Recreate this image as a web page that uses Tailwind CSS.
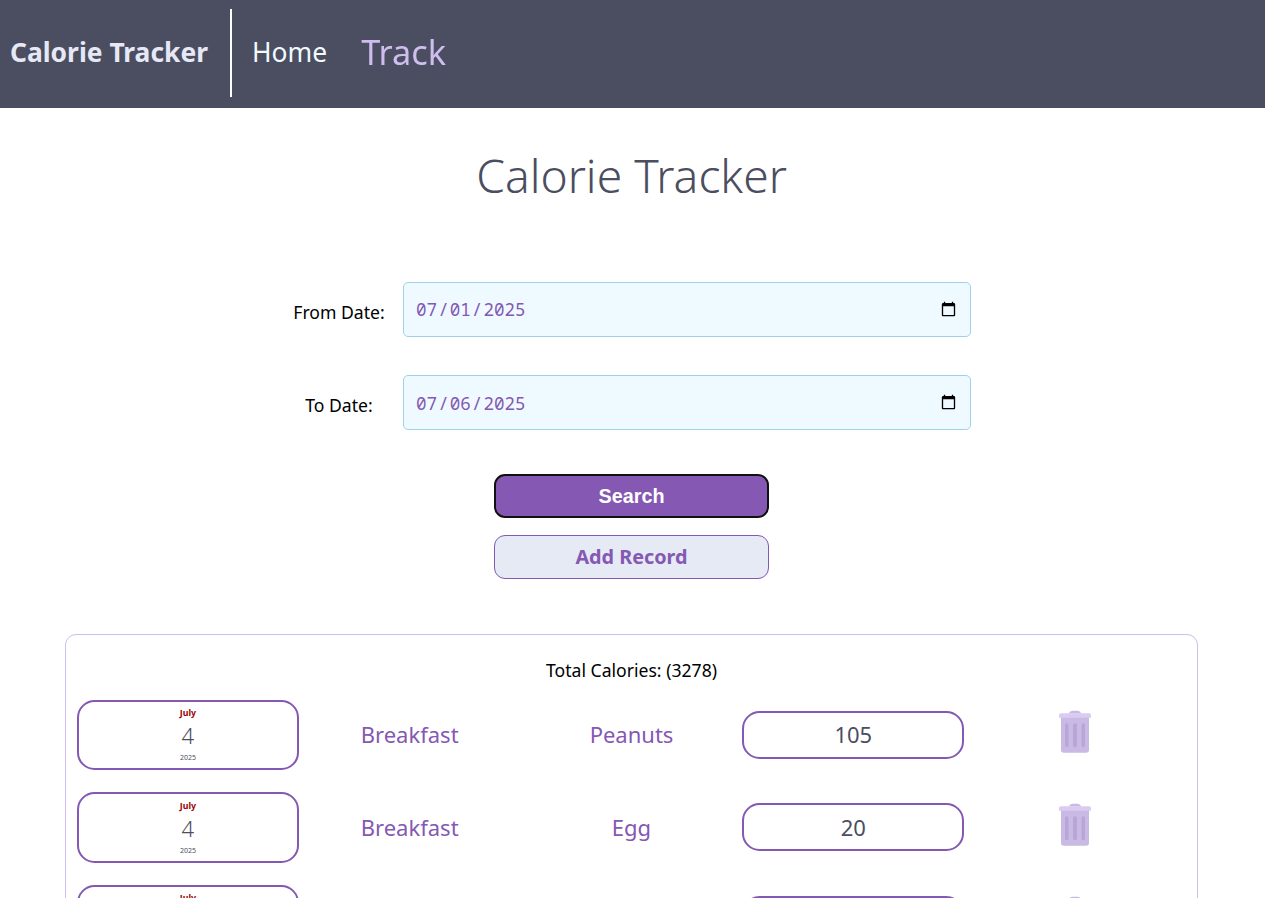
<!DOCTYPE html>
<html lang="en">
<head>
<meta charset="utf-8">
<title>Calorie Tracker</title>
<script src="https://cdn.jsdelivr.net/npm/@tailwindcss/browser@4"></script>
</head>
<body class="h-[898px] overflow-hidden bg-white text-black font-['Noto_Sans',sans-serif]">
<header class="flex h-[108px] items-start bg-[#4a4e60] pt-[9px]">
  <div class="flex h-[88px] w-[232px] items-center border-r-2 border-white pl-[10px] text-[26.4px] font-bold whitespace-nowrap text-[#e6e9f5]">Calorie Tracker</div>
  <nav class="flex h-[88px] items-center pl-5">
    <a class="text-[26.4px] text-[#f0faff]">Home</a>
    <a class="ml-[44px] inline-block scale-130 text-[26.4px] text-[#d0bdf0] will-change-transform">Track</a>
  </nav>
</header>
<main>
  <h1 class="mt-[34px] pr-[2px] text-center text-[46.2px] leading-[68px] font-light text-[#4a4e60]">Calorie Tracker</h1>
  <form class="mt-[72px] flex flex-col">
    <div class="flex h-[55px] items-center pl-[275px]">
      <label class="w-[128px] pt-[5px] text-center text-[17.6px]">From Date:</label>
      <input type="date" value="2025-07-01" class="h-[55px] w-[568px] rounded-[5px] border border-[#9ed2ea] bg-[#eefaff] pr-[11px] pl-[11px] font-['Noto_Sans_Mono',monospace] text-[17.6px] text-[#8458b3] [&::-webkit-calendar-picker-indicator]:h-[17px] [&::-webkit-calendar-picker-indicator]:w-[17px]">
    </div>
    <div class="mt-[38px] flex h-[55px] items-center pl-[275px]">
      <label class="w-[128px] pt-[5px] text-center text-[17.6px]">To Date:</label>
      <input type="date" value="2025-07-06" class="h-[55px] w-[568px] rounded-[5px] border border-[#9ed2ea] bg-[#eefaff] pt-px pr-[11px] pl-[11px] font-['Noto_Sans_Mono',monospace] text-[17.6px] text-[#8458b3] [&::-webkit-calendar-picker-indicator]:h-[17px] [&::-webkit-calendar-picker-indicator]:w-[17px]">
    </div>
    <div class="mt-[44px] flex flex-col gap-[17px] pl-[494px]">
      <button type="button" class="h-[44px] w-[275px] rounded-[11px] border-2 border-[#101010] bg-[#8458b3] pt-px font-['Liberation_Sans',sans-serif] text-[19.8px] font-bold text-white">Search</button>
      <button type="button" class="h-[44px] w-[275px] rounded-[11px] border border-[#8458b3] bg-[#e5eaf5] text-[19.8px] font-bold text-[#8458b3]">Add Record</button>
    </div>
  </form>
  <section class="mt-[55px] ml-[65px] h-[600px] w-[1133px] rounded-[11px] border border-[#d0bdf0] px-[11px] pt-[23px]">
    <p class="h-[41.7px] text-center text-[17.6px] leading-[24px]">Total Calories: (3278)</p>
    <div id="rows" class="flex flex-col gap-[22.5px]"></div>
  </section>
</main>
<template id="row">
  <div class="grid h-[70.2px] grid-cols-5 items-center text-center text-[22px] text-[#8458b3]">
    <div class="flex h-[70.2px] flex-col items-center rounded-[17.6px] border-2 border-[#8458b3] pt-[4.4px]">
      <span class="h-[14px] text-[8.8px] leading-[15px] font-bold text-[#9b0000]">July</span>
      <span class="h-[32px] text-[22px] leading-[31px] font-light text-[#4a4e60]">4</span>
      <span class="h-[12px] text-[7px] leading-[12px] text-[#4a4e60]">2025</span>
    </div>
    <div data-meal class="pb-[0.4px]"></div>
    <div data-food class="pb-[0.4px]"></div>
    <div data-cal class="mb-[0.4px] flex h-[48px] items-center justify-center rounded-[17.6px] border-2 border-[#8458b3] text-[#4a4e60]"></div>
    <div class="flex justify-center">
      <svg width="34" height="44" viewBox="0 0 34 44" class="-mt-[5px]">
        <path d="M10.500 3.500q1.500-2.700 4-2.700h5q2.500 0 4 2.700z" fill="#c9b9e5"/>
        <path d="M3 6h28v34q0 2.800-3 2.800H6q-3 0-3-2.800z" fill="#c9b9e5"/>
        <path d="M1 5.300q0-2 2-2h28q2 0 2 2v2.400H1z" fill="#d9ccf0"/>
        <g fill="#b9a5d8"><rect x="7" y="13.200" width="3.5" height="24" rx="1.75"/><rect x="15" y="13.200" width="4" height="24" rx="2"/><rect x="23.500" y="13.200" width="3.5" height="24" rx="1.75"/></g>
      </svg>
    </div>
  </div>
</template>
<script>
[["Breakfast","Peanuts","105"],["Breakfast","Egg","20"],["Breakfast","",""]].forEach(function (r) {
  var n = document.getElementById("row").content.cloneNode(true);
  n.querySelector("[data-meal]").textContent = r[0];
  n.querySelector("[data-food]").textContent = r[1];
  n.querySelector("[data-cal]").textContent = r[2];
  document.getElementById("rows").appendChild(n);
});
</script>
</body>
</html>
